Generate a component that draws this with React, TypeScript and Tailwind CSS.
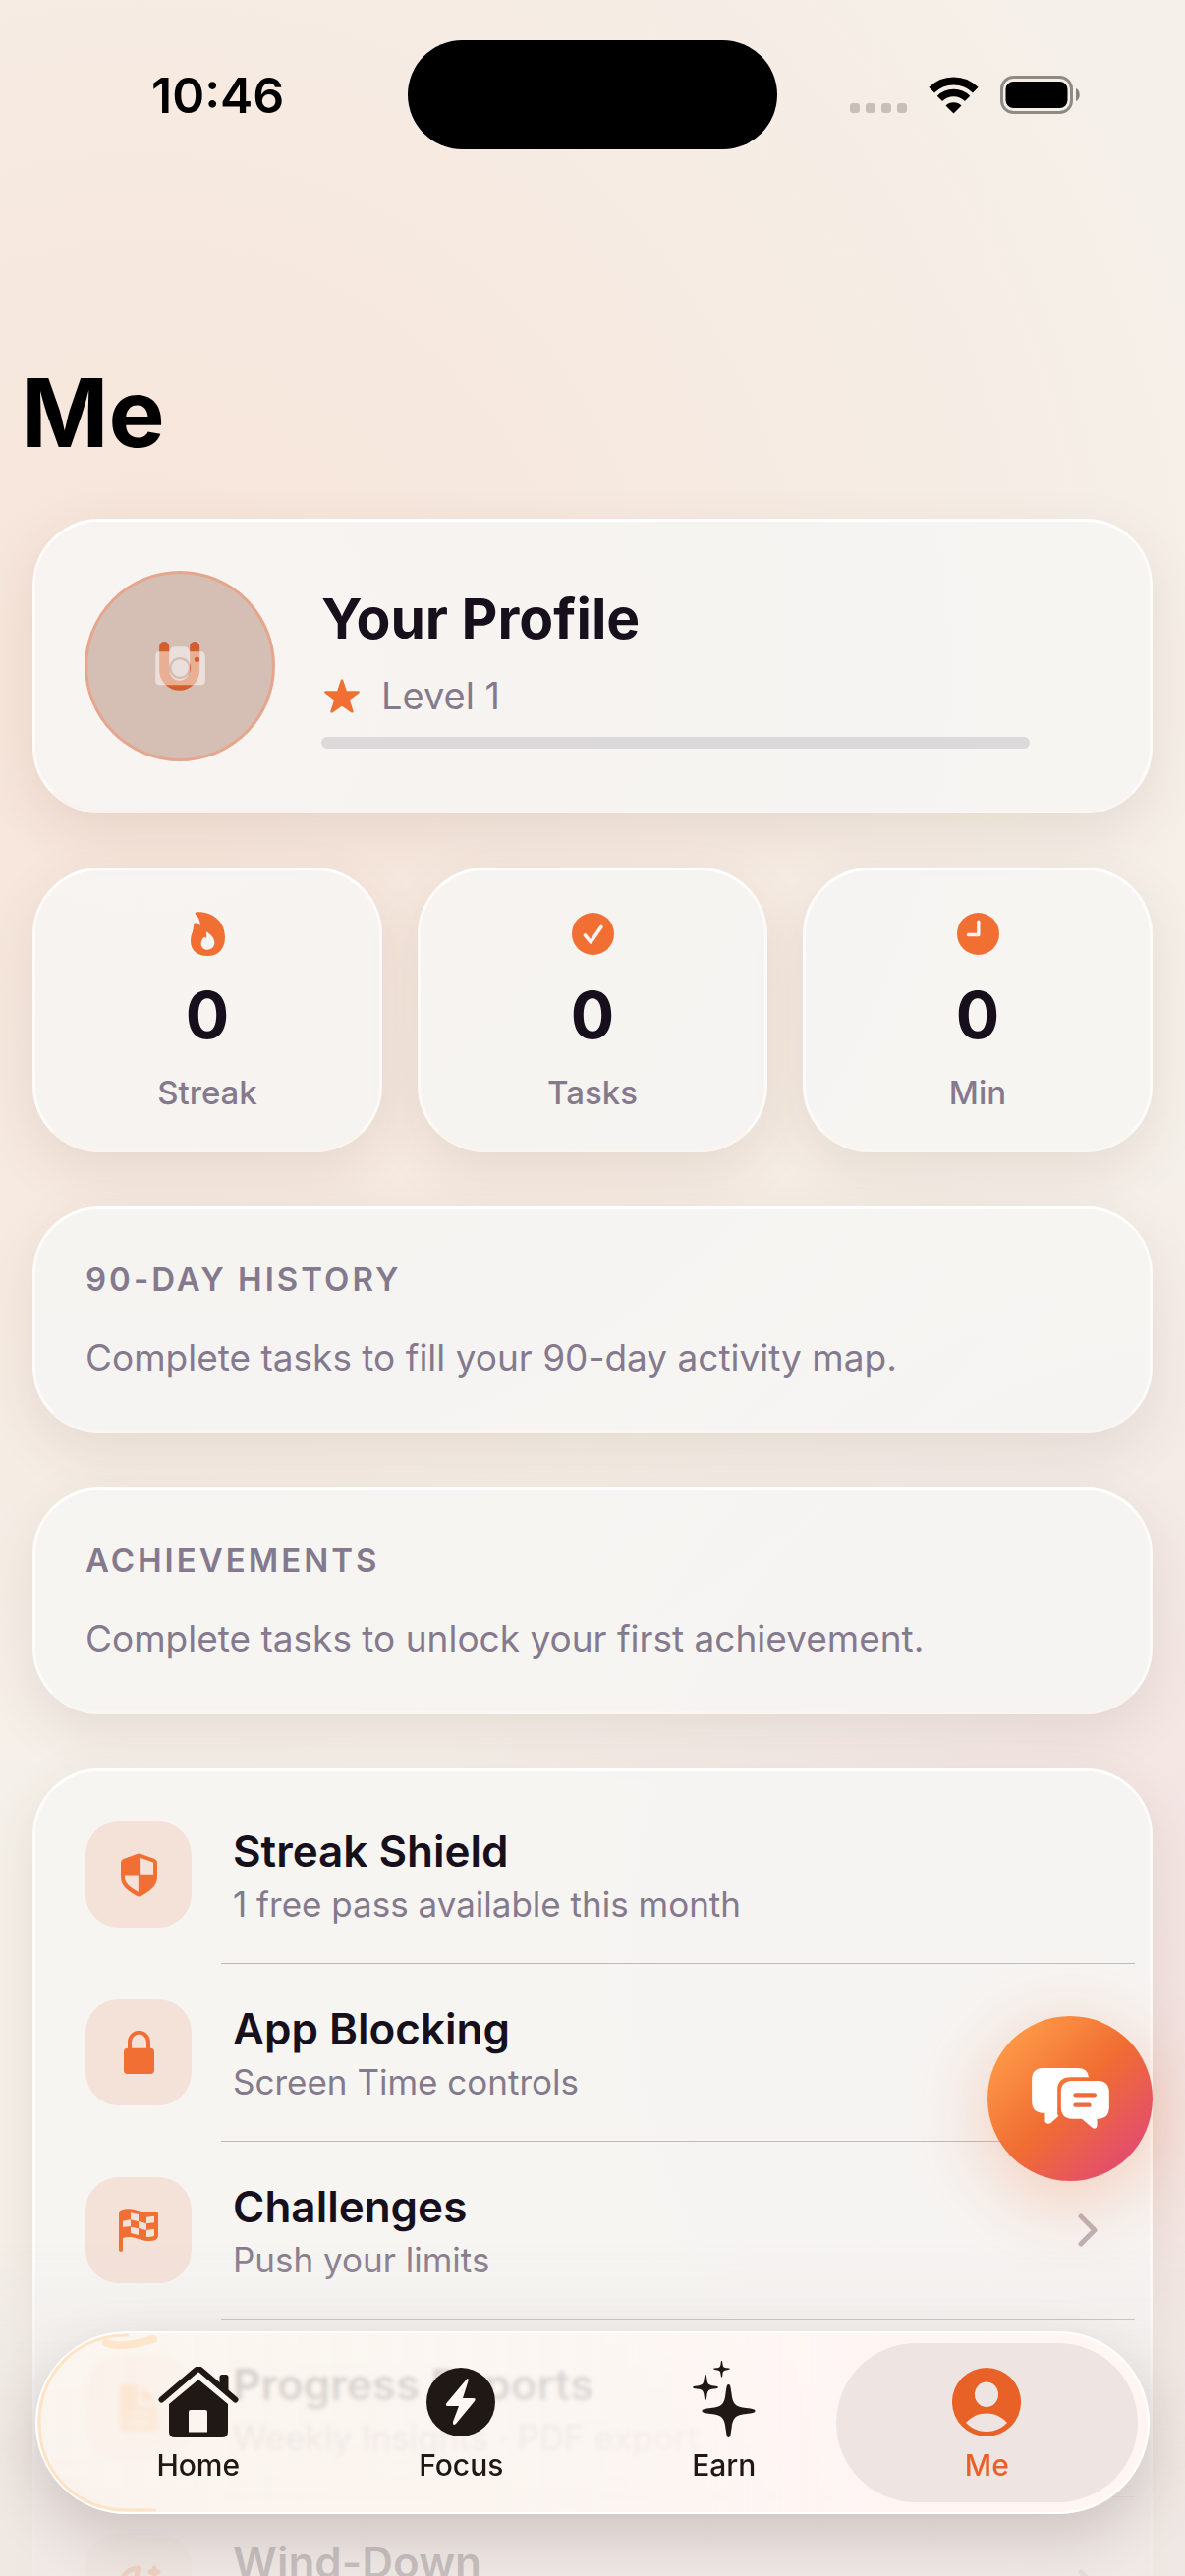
import React from 'react';
import { MoonStar } from 'lucide-react';

const STAR_PATH =
  'M0-27C2-27 2-24 3-18 4-7 7-4 18-3 24-2 27-2 27 0 27 2 24 2 18 3 7 4 4 7 3 18 2 24 2 27 0 27-2 27-2 24-3 18-4 7-7 4-18 3-24 2-27 2-27 0-27-2-24-2-18-3-7-4-4-7-3-18-2-24-2-27 0-27Z';

// Status bar

const WifiIcon: React.FC = () => (
  <svg viewBox="0 0 51 38" className="h-[38px] w-[51px]" fill="none" stroke="#000" strokeWidth="8">
    <path d="M3.2 13.7A31.5 31.5 0 0 1 47.8 13.7" />
    <path d="M11.4 22.4A20 20 0 0 1 39.6 22.4" strokeWidth="7.5" />
    <path d="M25.5 37.500L17.500 29.500A11.500 11.500 0 0 1 33.500 29.500Z" fill="#000" stroke="none" />
  </svg>
);

const BatteryIcon: React.FC = () => (
  <svg viewBox="0 0 82 39" className="h-[39px] w-[82px]">
    <rect x="1.5" y="1.5" width="71" height="36" rx="12" fill="none" stroke="#000" strokeOpacity="0.42" strokeWidth="3" />
    <rect x="5.5" y="6" width="63" height="27" rx="8" fill="#000" />
    <path d="M77 13C82 15 82 24 77 26Z" fill="#000" fillOpacity="0.45" />
  </svg>
);

const StatusBar: React.FC = () => (
  <header className="grid grid-cols-[1fr_376px_1fr] items-center pt-[41px]">
    <time className="pl-[154px] text-[50px] leading-[60px] font-semibold text-black">10:46</time>
    <div className="h-[111px] rounded-full bg-black" />
    <div className="flex items-center justify-end gap-[22px] pr-[106px]">
      <div className="flex gap-[6px] self-end pb-[1px]">
        {[0, 1, 2, 3].map((dot) => (
          <span key={dot} className="size-[10px] rounded-[3px] bg-[#c9bfba]" />
        ))}
      </div>
      <WifiIcon />
      <BatteryIcon />
    </div>
  </header>
);

// Content icons

const FlameIcon: React.FC = () => (
  <svg viewBox="0 0 105 135" className="h-[45px] w-[35px]" fill="currentColor" fillRule="evenodd">
    <path d="M18 1C60-3 105 25 105 78C105 114 84 135 52 135C20 135 0 118 0 90C0 70 9 60 9 42Q9 34 15 34Q24 36 29 42C30 28 24 16 15 8Q12 3 18 1ZM50 62C48 61 48 63 48 66C49 70 49 76 47 82Q46 78 42 77C36 82 32 88 32 98C32 108 40 116 51 116C64 116 73 108 73 94C73 84 66 72 50 62Z" />
  </svg>
);

const CheckIcon: React.FC = () => (
  <svg viewBox="0 0 128 134" className="h-[45px] w-[43px]">
    <circle cx="64" cy="67" r="64" fill="currentColor" />
    <path d="M40 71L57 92L89 46" fill="none" stroke="#f5f3f1" strokeWidth="11" strokeLinecap="round" strokeLinejoin="round" />
  </svg>
);

const ClockIcon: React.FC = () => (
  <svg viewBox="0 0 128 134" className="h-[45px] w-[43px]">
    <circle cx="64" cy="67" r="64" fill="currentColor" />
    <path d="M65 30V70H34" fill="none" stroke="#f5f4f2" strokeWidth="10" strokeLinecap="round" strokeLinejoin="round" />
  </svg>
);

const ShieldIcon: React.FC = () => (
  <svg viewBox="0 0 112 134" className="h-[45px] w-[37px]" fill="currentColor" fillRule="evenodd">
    <path d="M50 2Q56-1 62 2L104 17Q112 20 112 28V74C112 102 88 118 62 132Q56 135 50 132C24 118 0 102 0 74V28Q0 20 8 17ZM58 13V65H100V28ZM12 67V74C12 92 28 105 54 119V67Z" />
  </svg>
);

const LockIcon: React.FC = () => (
  <svg viewBox="0 0 93 132" className="h-[44px] w-[31px]">
    <path d="M18 60V34A28 28 0 0 1 75 34V60" fill="none" stroke="currentColor" strokeWidth="12" />
    <rect y="53" width="93" height="79" rx="12" fill="currentColor" />
  </svg>
);

const FlagIcon: React.FC = () => (
  <svg viewBox="0 0 120 132" className="h-[44px] w-[40px]" fill="currentColor" fillRule="evenodd">
    <path d="M0 14Q0 8 6 5C20 0 36-1 50 4C70 11 90 14 106 10Q120 8 120 16V84Q120 92 112 96C96 102 76 98 58 92C40 86 26 86 12 90V126Q12 132 6 132Q0 132 0 126ZM36 13V34L60 40V18ZM84 26V46L108 43V23ZM12 38V57L36 54V33ZM60 39V60L84 66V46ZM36 56V75L60 81V61ZM84 66V87Q106 88 108 82V62Z" />
  </svg>
);

const ReportIcon: React.FC = () => (
  <svg viewBox="0 0 39 48" className="h-[48px] w-[39px]" fill="#ff9a3d" fillRule="evenodd">
    <path d="M5 0H18V18Q18 22 22 22H39V43Q39 48 34 48H5Q0 48 0 43V5Q0 0 5 0ZM9 28V31H30V28ZM9 37V40H30V37Z" />
    <path d="M22 1L38 18H24Q22 18 22 16Z" />
  </svg>
);

const LevelStarIcon: React.FC = () => (
  <svg viewBox="0 0 100 96" className="h-[35px] w-[36px] text-[#f26f34]">
    <path
      d="M50 4L61 37L96 37L68 58L79 92L50 72L21 92L32 58L4 37L39 37Z"
      fill="currentColor"
      stroke="currentColor"
      strokeWidth="7"
      strokeLinejoin="round"
    />
  </svg>
);

const AvatarIcon: React.FC = () => (
  <svg viewBox="0 0 152 150" className="h-[50px] w-[51px]">
    <path d="M27 15V88A46.500 46.500 0 0 0 120 88V15" fill="none" stroke="#d25f2b" strokeWidth="30" strokeLinecap="round" />
    <path
      d="M14 31H40Q44 31 45 27Q48 16 58 16H90Q100 16 103 27Q104 31 108 31H138Q152 31 152 45V119Q152 133 138 133H14Q0 133 0 119V45Q0 31 14 31ZM42 81A33 33 0 1 0 108 81A33 33 0 1 0 42 81ZM49 81A26 26 0 1 0 101 81A26 26 0 1 0 49 81ZM119 55A8 8 0 1 0 135 55A8 8 0 1 0 119 55Z"
      fill="#fff"
      fillOpacity="0.5"
      fillRule="evenodd"
    />
  </svg>
);

const ChevronIcon: React.FC = () => (
  <svg viewBox="0 0 20 34" className="h-[34px] w-[20px]">
    <path d="M3 3L17 17L3 31" fill="none" stroke="#bfb1b7" strokeWidth="5" strokeLinecap="round" strokeLinejoin="round" />
  </svg>
);

const ChatIcon: React.FC = () => (
  <svg viewBox="0 0 236 186" className="h-[62px] w-[79px]" fill="#fff">
    <path d="M34 0H140Q170 0 174 28H118C92 28 78 42 78 66V142Q80 146 82 146L58 168Q46 174 40 164V137H34C12 137 0 125 0 103V34C0 12 12 0 34 0Z" />
    <path d="M123 39H202C224 39 236 51 236 73V121C236 143 224 155 202 155H199V176Q197 188 186 184L152 155H123C101 155 89 143 89 121V73C89 51 101 39 123 39Z" />
    <path d="M133 82H191M133 113H175" fill="none" stroke="#f06a3c" strokeWidth="13" strokeLinecap="round" />
  </svg>
);

// Tab bar icons

const HomeIcon: React.FC = () => (
  <svg viewBox="0 0 82 72" className="h-[72px] w-[82px]" fill="currentColor">
    <path d="M3.500 33.500L38.500 3.500Q41 1.500 43.500 3.500L78.500 33.500" fill="none" stroke="currentColor" strokeWidth="6" strokeLinecap="round" strokeLinejoin="round" />
    <path d="M62.500 20V10.500Q62.500 8 65 8H69Q71.500 8 71.500 10.500V28Z" />
    <path fillRule="evenodd" d="M41 13L71 38V66Q71 72 65 72H17Q11 72 11 66V38ZM33 44Q31 44 31 46V66.500H50V46Q50 44 48 44Z" />
  </svg>
);

const FocusIcon: React.FC = () => (
  <svg viewBox="0 0 70 72" className="h-[72px] w-[70px]">
    <circle cx="35" cy="36" r="35" fill="currentColor" />
    <path d="M41 12.500L20.500 37Q18.500 40 22 40H33L27 56Q26.500 60.500 30 58L49 35Q51 32 47.500 32H37L42.500 14.500Q43 11 41 12.500Z" fill="#fff8f4" />
  </svg>
);

const EarnIcon: React.FC = () => (
  <svg viewBox="0 0 64 78" className="-mt-[6px] h-[78px] w-[64px]" fill="currentColor">
    <path d={STAR_PATH} transform="translate(36.500 51)" />
    <path d={STAR_PATH} transform="translate(13 27) scale(0.480)" />
    <path d={STAR_PATH} transform="translate(29.500 8.300) scale(0.310)" />
  </svg>
);

const MeIcon: React.FC = () => (
  <svg viewBox="0 0 70 72" className="h-[72px] w-[70px]" fill="currentColor" fillRule="evenodd">
    <path d="M35 1A35 35 0 1 0 35 71A35 35 0 1 0 35 1ZM35 15.500A12 12.700 0 1 1 35 41A12 12.700 0 1 1 35 15.500ZM14 57C20 50.500 27 47.500 35 47.500C43 47.500 50 50.500 56 57C50 63 43 66 35 66C27 66 20 63 14 57Z" />
  </svg>
);

const Card: React.FC<{ className?: string; children: React.ReactNode }> = ({ className = '', children }) => (
  <section
    className={`rounded-[68px] border-[3px] border-x-white/80 border-t-white border-b-white/50 bg-[#f6f5f3]/90 bg-clip-padding shadow-[0_18px_54px_rgba(90,60,40,0.1)] ${className}`}
  >
    {children}
  </section>
);

const stats = [
  { label: 'Streak', value: 0, icon: <FlameIcon /> },
  { label: 'Tasks', value: 0, icon: <CheckIcon /> },
  { label: 'Min', value: 0, icon: <ClockIcon /> },
];

const sections = [
  { title: '90-DAY HISTORY', text: 'Complete tasks to fill your 90-day activity map.' },
  { title: 'ACHIEVEMENTS', text: 'Complete tasks to unlock your first achievement.' },
];

const settings = [
  { title: 'Streak Shield', subtitle: '1 free pass available this month', icon: <ShieldIcon />, chevron: false },
  { title: 'App Blocking', subtitle: 'Screen Time controls', icon: <LockIcon />, chevron: true },
  { title: 'Challenges', subtitle: 'Push your limits', icon: <FlagIcon />, chevron: true },
  { title: 'Progress Reports', subtitle: 'Weekly Insights · PDF export', icon: <ReportIcon />, chevron: true },
  { title: 'Wind-Down', subtitle: '', icon: <MoonStar size={48} strokeWidth={2.5} />, chevron: true },
];

const tabs = [
  { label: 'Home', icon: <HomeIcon />, active: false },
  { label: 'Focus', icon: <FocusIcon />, active: false },
  { label: 'Earn', icon: <EarnIcon />, active: false },
  { label: 'Me', icon: <MeIcon />, active: true },
];

const ProfileCard: React.FC = () => (
  <Card className="flex items-center gap-[47px] px-[50px] py-[50px]">
    <button
      aria-label="Change profile photo"
      className="flex size-[194px] shrink-0 items-center justify-center rounded-full border-[3px] border-[#e5a68d] bg-[#d5beb4]"
    >
      <AvatarIcon />
    </button>
    <div className="mr-[72px] flex flex-1 flex-col gap-[18px]">
      <h2 className="text-[57px] leading-[72px] font-bold text-[#17101c]">Your Profile</h2>
      <div className="flex items-center gap-[22px] pl-[3px]">
        <LevelStarIcon />
        <span className="text-[38px] leading-[48px] text-[#857a8d]">Level 1</span>
      </div>
      <div role="progressbar" aria-label="Level progress" aria-valuenow={0} className="h-[12px] rounded-full bg-[#dbd9d9]" />
    </div>
  </Card>
);

const TabBar: React.FC = () => (
  <nav className="fixed inset-x-[36px] bottom-[63px] rounded-full border-[2px] border-white bg-[linear-gradient(90deg,rgba(255,248,240,0.68),rgba(255,249,245,0.74)_50%,rgba(255,246,244,0.95)_75%)] px-[30px] py-[10px] shadow-[0_24px_60px_rgba(70,50,50,0.2)] backdrop-blur-[2px]">
    <svg
      viewBox="0 0 124 182"
      className="absolute top-0 left-0 h-full w-[124px]"
      fill="none"
      stroke="#ffdcb4"
      strokeLinecap="round"
    >
      <path d="M92 2C38 2 2 42 2 91C2 140 38 180 92 180H120" strokeWidth="3" strokeOpacity="0.7" />
      <path d="M70 10C82 14 96 13 118 6" strokeWidth="8" strokeOpacity="0.6" />
    </svg>
    <ul className="relative grid grid-cols-4">
      {tabs.map((tab) => (
        <li key={tab.label}>
          <a
            href={`#${tab.label.toLowerCase()}`}
            aria-current={tab.active ? 'page' : undefined}
            className={`-mx-[20px] flex h-[162px] flex-col items-center justify-between rounded-full pt-[24px] pb-[20px] ${
              tab.active ? 'bg-[#eee5e2] text-[#e86126]' : 'text-[#1f1815]'
            }`}
          >
            {tab.icon}
            <span className="text-[30px] leading-[36px] font-medium">{tab.label}</span>
          </a>
        </li>
      ))}
    </ul>
  </nav>
);

export default function App() {
  return (
    <div className="relative h-screen overflow-hidden bg-[#f5f0e9] bg-[radial-gradient(circle_at_12%_26%,#f7e4d9,transparent_52%),radial-gradient(circle_at_105%_76%,#f3e3e2,transparent_36%)] font-[Inter,'Liberation_Sans',sans-serif]">
      <StatusBar />

      <main>
        <h1 className="mt-[208px] pl-[21px] text-[96px] leading-[120px] font-bold text-black">Me</h1>

        <div className="mt-[48px] flex flex-col gap-[55px] px-[33px]">
          <ProfileCard />

          <div className="grid grid-cols-3 gap-[36px]">
            {stats.map((stat) => (
              <Card key={stat.label} className="flex flex-col items-center gap-[22px] pt-[42px] pb-[39px]">
                <div className="text-[#f26f34]">{stat.icon}</div>
                <strong className="text-[66px] leading-[76px] font-bold text-[#17101c]">{stat.value}</strong>
                <span className="text-[33px] leading-[38px] font-medium text-[#857a8d]">{stat.label}</span>
              </Card>
            ))}
          </div>

          {sections.map((section) => (
            <Card key={section.title} className="flex flex-col gap-[32px] px-[51px] pt-[47px] pb-[50px]">
              <h3 className="text-[33px] leading-[48px] font-semibold tracking-[3px] text-[#857a8d]">{section.title}</h3>
              <p className="text-[37px] leading-[48px] text-[#857a8d]">{section.text}</p>
            </Card>
          ))}

          <Card className="p-[15px]">
            <ul>
              {settings.map((item) => (
                <li key={item.title}>
                  <button className="flex h-[180px] w-full items-center gap-[42px] pr-[38px] pl-[36px] text-left">
                    <span className="flex size-[108px] shrink-0 items-center justify-center rounded-[34px] bg-[#f4e1d8] text-[#f26f34]">
                      {item.icon}
                    </span>
                    <span className="flex-1">
                      <span className="block text-[44px] leading-[60px] font-semibold text-[#17101c]">{item.title}</span>
                      <span className="block h-[48px] text-[35px] leading-[48px] text-[#857a8d]">{item.subtitle}</span>
                    </span>
                    {item.chevron && <ChevronIcon />}
                  </button>
                  <div className="ml-[174px] h-px bg-[#bdbab9]" />
                </li>
              ))}
            </ul>
          </Card>
        </div>
      </main>

      {/* fades the list out behind the tab bar */}
      <div className="pointer-events-none fixed inset-x-0 bottom-0 h-[340px] bg-[linear-gradient(to_bottom,rgba(238,232,229,0),rgba(236,230,227,0.5)_45%,rgba(238,231,227,0.82)_75%)]" />

      <button
        aria-label="Open chat"
        className="fixed right-[33px] bottom-[402px] flex size-[168px] items-center justify-center rounded-full bg-[linear-gradient(135deg,#ff9f4a_8%,#f06d32_50%,#e0457b_95%)] shadow-[0_18px_80px_rgba(242,111,52,0.32)]"
      >
        <ChatIcon />
      </button>

      <TabBar />
    </div>
  );
}
